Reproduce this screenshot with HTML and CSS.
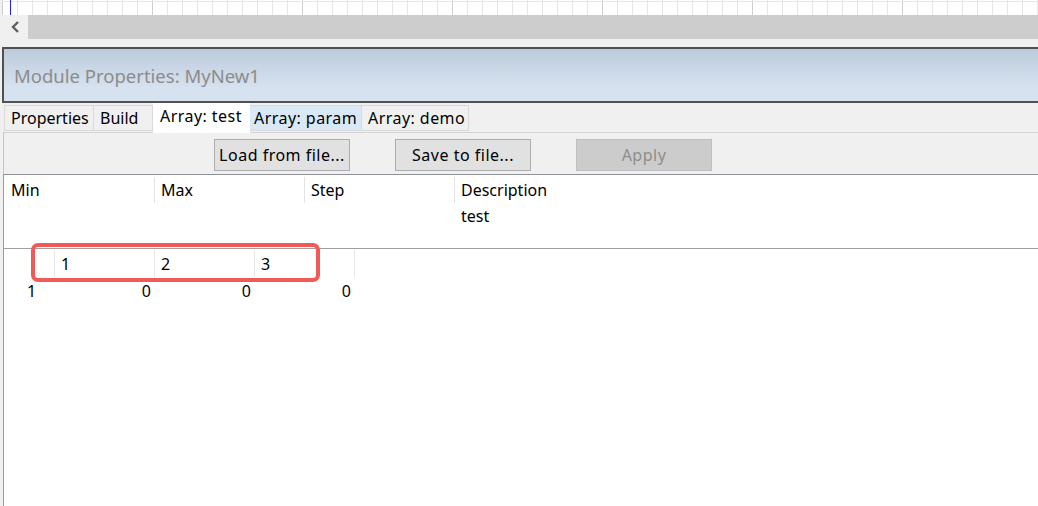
FILE: index.html
```html
<!DOCTYPE html>
<html lang="en">
<head>
  <meta charset="UTF-8">
  <title>Module Properties: MyNew1</title>
  <link rel="stylesheet" href="styles.css">
</head>
<body>
  <div class="ruler"></div>

  <div class="hscroll">
    <div class="hscroll-btn">
      <svg width="10" height="12" viewBox="0 0 10 12"><polyline points="8,1 3,6 8,11" fill="none" stroke="#5f5f5f" stroke-width="2.4"/></svg>
    </div>
    <div class="hscroll-track"></div>
  </div>

  <div class="dock">
    <div class="dock-title">Module Properties: MyNew1</div>

    <div class="tabs">
      <div class="tab tab-props">Properties</div>
      <div class="tab tab-build">Build</div>
      <div class="tab tab-array tab-test is-selected">Array: test</div>
      <div class="tab tab-array tab-param is-hover">Array: param</div>
      <div class="tab tab-array tab-demo">Array: demo</div>
    </div>

    <div class="page">
      <div class="toolbar">
        <button class="btn">Load from file...</button>
        <button class="btn">Save to file...</button>
        <button class="btn" disabled>Apply</button>
      </div>

      <div class="grid">
        <div class="grid-head">
          <div class="hcell"><div class="hcell-label">Min</div></div>
          <div class="hcell has-sep"><div class="hcell-label">Max</div></div>
          <div class="hcell has-sep"><div class="hcell-label">Step</div></div>
          <div class="hcell hcell-wide has-sep">
            <div class="hcell-label">Description</div>
            <div class="hcell-sub">test</div>
          </div>
        </div>

        <div class="grid-body">
          <div class="row row-index">
            <div class="cell cell-corner"></div>
            <div class="cell">1</div>
            <div class="cell">2</div>
            <div class="cell">3</div>
            <div class="cell cell-end"></div>
          </div>
          <div class="row row-values">
            <div class="cell cell-corner">1</div>
            <div class="cell">0</div>
            <div class="cell">0</div>
            <div class="cell">0</div>
          </div>
          <div class="mark"></div>
        </div>
      </div>
    </div>
  </div>
</body>
</html>
```

FILE: styles.css
```css
* {
  box-sizing: border-box;
}

html,
body {
  height: 100%;
}

body {
  margin: 0;
  background: #f0f0f0;
  font-family: "Noto Sans", "Liberation Sans", sans-serif;
  font-size: 16px;
  color: #000;
  overflow: hidden;
}

/* top ruler grid */
.ruler {
  height: 15px;
  margin-left: 2px;
  background:
    linear-gradient(#1f1fff, #1f1fff) 8px 0 / 1px 100% no-repeat,
    linear-gradient(#e6e6e6, #e6e6e6) 0 1px / 100% 1px no-repeat,
    linear-gradient(to right, #cfcfcf 1px, transparent 1px) 0 0 / 150px 100%,
    linear-gradient(to right, #e6e6e6 1px, transparent 1px) 0 0 / 15px 100%,
    #fff;
}

.hscroll {
  display: flex;
  height: 24px;
}

.hscroll-btn {
  width: 28px;
  display: flex;
  align-items: center;
  padding-left: 10px;
  background: #f0f0f0;
}

.hscroll-track {
  flex: 1;
  background: #cdcdcd;
}

.dock {
  margin-top: 8px;
  margin-left: 2px;
  height: calc(100% - 47px);
  display: flex;
  flex-direction: column;
}

.dock-title {
  height: 56px;
  border-top: 2px solid #505050;
  border-bottom: 2px solid #505050;
  border-left: 2px solid #505050;
  background: linear-gradient(#bccbdc, #d6e2ef 75%);
  color: #8c8c8c;
  font-size: 18.5px;
  display: flex;
  align-items: center;
  padding-left: 10px;
}

.tabs {
  display: flex;
  align-items: flex-end;
  height: 29px;
  padding-left: 2px;
  position: relative;
  z-index: 1;
}

.tab {
  height: 26px;
  margin-bottom: 1px;
  padding: 0 0 0 6px;
  line-height: 24px;
  background: #f0f0f0;
  border: 1px solid #d9d9d9;
  border-left: none;
  white-space: nowrap;
}

.tab:first-child {
  border-left: 1px solid #d9d9d9;
}

.tab-array {
  letter-spacing: 0.45px;
}

.tab-props { width: 90px; }
.tab-build { width: 59px; }
.tab-test { width: 97px; }
.tab-param { width: 112px; }
.tab-demo { width: 107px; }

.tab.is-selected {
  height: 30px;
  margin-bottom: -1px;
  padding: 0 0 5px 7px;
  background: #fff;
  border-color: #fff;
}

.tab.is-hover {
  background: #d9e8f7;
  padding-left: 4px;
}

.page {
  flex: 1;
  display: flex;
  flex-direction: column;
  margin-left: 1px;
  border-top: 1px solid #d4d4d4;
  border-left: 1px solid #c4c4c4;
}

.toolbar {
  height: 41px;
  display: flex;
  gap: 45px;
  padding: 6px 0 0 210px;
}

.btn {
  width: 136px;
  height: 32px;
  font: inherit;
  letter-spacing: 0.5px;
  color: #000;
  background: #e1e1e1;
  border: 1px solid #adadad;
  padding: 0;
}

.btn:disabled {
  background: #cccccc;
  border-color: #bfbfbf;
  color: #8d8d8d;
}

.grid {
  flex: 1;
  background: #fff;
  border-top: 1px solid #8f8f98;
  margin-left: -1px;
  border-left: 1px solid #9c9c9c;
}

.grid-head {
  display: flex;
  height: 74px;
  border-bottom: 1px solid #a0a0a0;
}

.hcell {
  width: 150px;
}

.hcell-wide {
  flex: 1;
}

.hcell-label,
.hcell-sub {
  height: 26px;
  line-height: 26px;
  padding-left: 7px;
}

.hcell-label {
  margin-top: 2px;
}

.hcell.has-sep .hcell-label {
  border-left: 1px solid #e3e3e3;
  padding-left: 6px;
}

.hcell.has-sep .hcell-sub {
  padding-left: 7px;
}

.grid-body {
  position: relative;
}

.row {
  display: flex;
}

.row-index {
  height: 28px;
  padding-top: 1px;
}

.row-values {
  height: 26px;
}

.cell {
  width: 100px;
  line-height: 26px;
  border-left: 1px solid transparent;
}

.cell-corner {
  width: 50px;
  border-left: none;
}

.row-index .cell {
  border-left-color: #e6e6e6;
  padding: 1px 0 0 6px;
}

.row-index .cell-corner {
  padding: 0;
}

.row-values .cell {
  text-align: right;
  padding-right: 3px;
  padding-top: 1px;
}

.row-values .cell-corner {
  text-align: center;
  padding: 1px 0 0 5px;
}

/* red highlight round the index row */
.mark {
  position: absolute;
  left: 27px;
  top: -6px;
  width: 289px;
  height: 39px;
  border: 4px solid #f05a58;
  border-radius: 7px;
}
```
